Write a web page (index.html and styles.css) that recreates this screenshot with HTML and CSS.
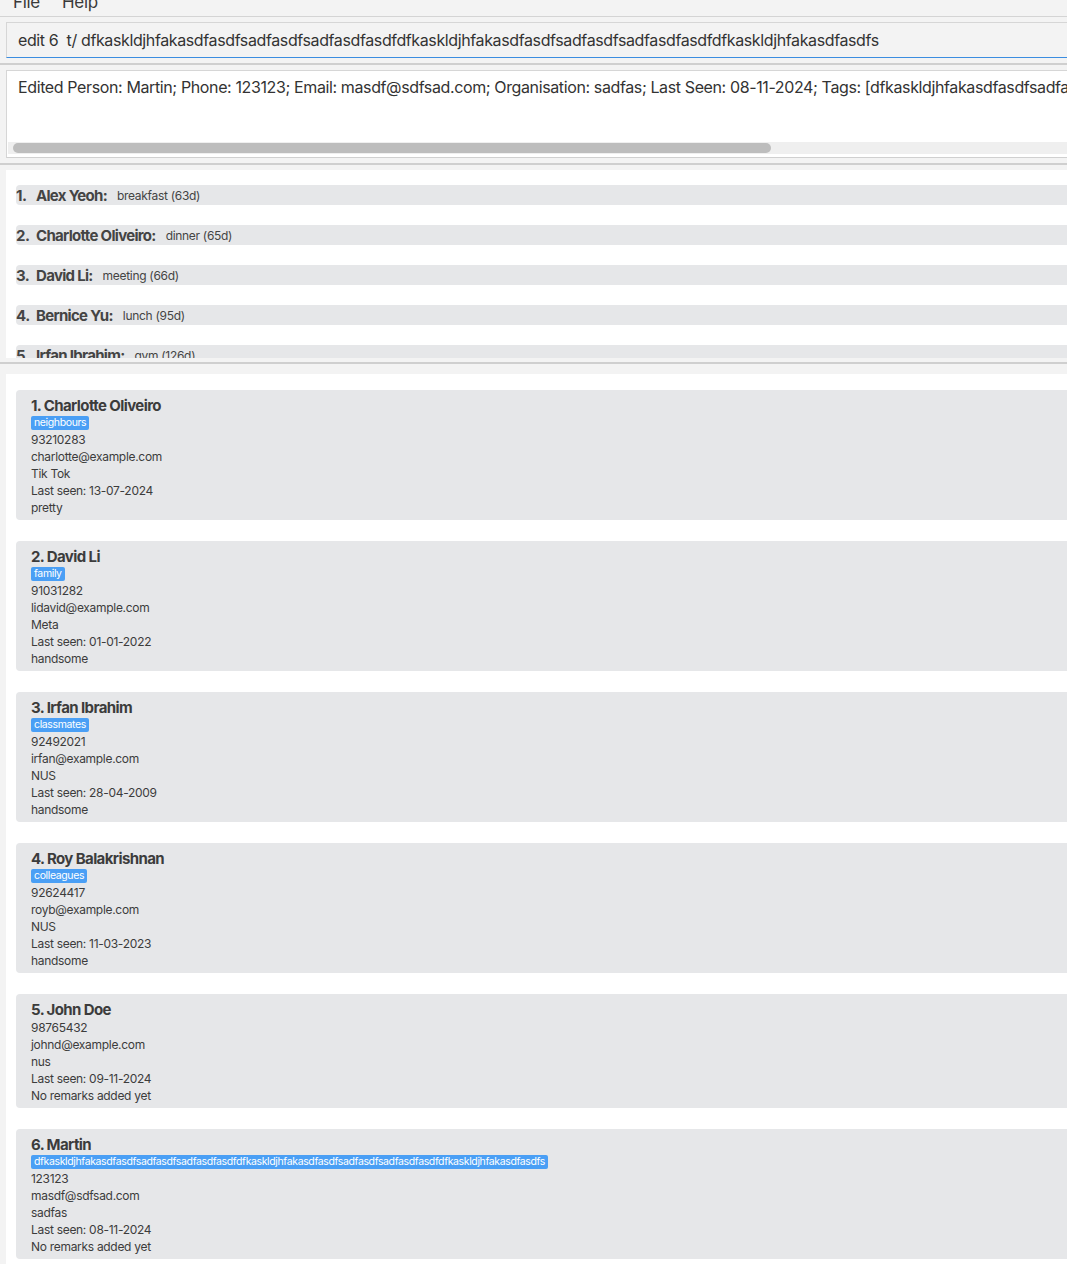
FILE: index.html
```html
<!DOCTYPE html>
<html>
<head>
<meta charset="utf-8">
<link rel="stylesheet" href="styles.css">
</head>
<body>
<div class="app">
  <div class="menubar">
    <span class="menu-item">File</span>
    <span class="menu-item">Help</span>
  </div>
  <div class="pane pane-cmd">
    <div class="command-box">edit 6  t/ dfkaskldjhfakasdfasdfsadfasdfsadfasdfasdfdfkaskldjhfakasdfasdfsadfasdfsadfasdfasdfdfkaskldjhfakasdfasdfs</div>
  </div>
  <div class="divider"></div>
  <div class="pane pane-result">
    <div class="result-box">
      <div class="result-text">Edited Person: Martin; Phone: 123123; Email: masdf@sdfsad.com; Organisation: sadfas; Last Seen: 08-11-2024; Tags: [dfkaskldjhfakasdfasdfsadfasdfsadfasdfasdfdfkaskldjhfakasdfasdfsadfasdfsadfasdfasdfdfkaskldjhfakasdfasdfs]</div>
      <div class="scroll-track"><div class="scroll-thumb"></div></div>
    </div>
  </div>
  <div class="divider"></div>
  <div class="pane pane-reminders">
    <div class="reminder-panel">
      <div class="reminder-row"><span class="r-idx">1.</span><span class="r-name">Alex Yeoh:</span><span class="r-detail">breakfast (63d)</span></div>
      <div class="reminder-row"><span class="r-idx">2.</span><span class="r-name">Charlotte Oliveiro:</span><span class="r-detail">dinner (65d)</span></div>
      <div class="reminder-row"><span class="r-idx">3.</span><span class="r-name">David Li:</span><span class="r-detail">meeting (66d)</span></div>
      <div class="reminder-row"><span class="r-idx">4.</span><span class="r-name">Bernice Yu:</span><span class="r-detail">lunch (95d)</span></div>
      <div class="reminder-row"><span class="r-idx">5.</span><span class="r-name">Irfan Ibrahim:</span><span class="r-detail">gym (126d)</span></div>
    </div>
  </div>
  <div class="divider"></div>
  <div class="pane pane-list">
    <div class="person-list">
      <div class="card">
        <div class="card-title">1. Charlotte Oliveiro</div>
        <div class="tags"><span class="tag">neighbours</span></div>
        <div class="line">93210283</div>
        <div class="line">charlotte@example.com</div>
        <div class="line">Tik Tok</div>
        <div class="line">Last seen: 13-07-2024</div>
        <div class="line">pretty</div>
      </div>
      <div class="card">
        <div class="card-title">2. David Li</div>
        <div class="tags"><span class="tag">family</span></div>
        <div class="line">91031282</div>
        <div class="line">lidavid@example.com</div>
        <div class="line">Meta</div>
        <div class="line">Last seen: 01-01-2022</div>
        <div class="line">handsome</div>
      </div>
      <div class="card">
        <div class="card-title">3. Irfan Ibrahim</div>
        <div class="tags"><span class="tag">classmates</span></div>
        <div class="line">92492021</div>
        <div class="line">irfan@example.com</div>
        <div class="line">NUS</div>
        <div class="line">Last seen: 28-04-2009</div>
        <div class="line">handsome</div>
      </div>
      <div class="card">
        <div class="card-title">4. Roy Balakrishnan</div>
        <div class="tags"><span class="tag">colleagues</span></div>
        <div class="line">92624417</div>
        <div class="line">royb@example.com</div>
        <div class="line">NUS</div>
        <div class="line">Last seen: 11-03-2023</div>
        <div class="line">handsome</div>
      </div>
      <div class="card">
        <div class="card-title">5. John Doe</div>
        <div class="line">98765432</div>
        <div class="line">johnd@example.com</div>
        <div class="line">nus</div>
        <div class="line">Last seen: 09-11-2024</div>
        <div class="line">No remarks added yet</div>
      </div>
      <div class="card">
        <div class="card-title">6. Martin</div>
        <div class="tags"><span class="tag">dfkaskldjhfakasdfasdfsadfasdfsadfasdfasdfdfkaskldjhfakasdfasdfsadfasdfsadfasdfasdfdfkaskldjhfakasdfasdfs</span></div>
        <div class="line">123123</div>
        <div class="line">masdf@sdfsad.com</div>
        <div class="line">sadfas</div>
        <div class="line">Last seen: 08-11-2024</div>
        <div class="line">No remarks added yet</div>
      </div>
    </div>
  </div>
</div>
</body>
</html>
```
FILE: styles.css
```css
html, body {
  margin: 0;
  padding: 0;
  overflow: hidden;
  background: #f3f3f3;
}
body {
  font-family: Inter, "Noto Sans", sans-serif;
  color: #3a3a3a;
  height: 1264px;
}
.app {
  width: 1110px;
  display: flex;
  flex-direction: column;
}
.menubar {
  height: 16px;
  border-bottom: 1px solid #d4d4d4;
  display: flex;
  gap: 22px;
  padding-left: 13px;
  overflow: hidden;
  background: #f3f3f3;
}
.menu-item {
  font-size: 17px;
  line-height: 16px;
  margin-top: -6px;
  color: #3a3a3a;
  letter-spacing: -0.3px;
}
.pane {
  padding-left: 6px;
}
.pane-cmd {
  padding-top: 5px;
  padding-bottom: 5px;
}
.command-box {
  height: 34px;
  border: 1px solid #d6d6d6;
  border-bottom: 1px solid #3b8de0;
  background: #f3f3f3;
  font-size: 16px;
  line-height: 34px;
  padding-left: 11px;
  white-space: pre;
  overflow: hidden;
  letter-spacing: -0.38px;
  color: #333;
}
.divider {
  height: 2px;
  background: #cfcfcf;
}
.pane-result {
  padding-top: 5px;
  padding-bottom: 5px;
}
.result-box {
  height: 86px;
  border: 1px solid #d6d6d6;
  background: #fff;
  display: flex;
  flex-direction: column;
  justify-content: space-between;
  border-bottom-color: #d0d0d0;
}
.result-text {
  font-size: 16px;
  line-height: 22px;
  padding: 5px 0 0 11px;
  white-space: nowrap;
  overflow: hidden;
  letter-spacing: -0.38px;
  color: #333;
}
.scroll-track {
  height: 12px;
  background: #efefef;
  margin: 0 0 3px 1px;
  padding: 1px 0 1px 5px;
  box-sizing: border-box;
}
.scroll-thumb {
  width: 758px;
  height: 10px;
  border-radius: 5px;
  background: #bdbdbd;
}
.pane-reminders {
  padding-top: 5px;
  padding-bottom: 4px;
}
.reminder-panel {
  background: #fff;
  height: 188px;
  overflow: hidden;
  padding-top: 15px;
  box-sizing: border-box;
  display: flex;
  flex-direction: column;
  gap: 20px;
}
.reminder-row {
  flex: none;
  margin-left: 10px;
  height: 20px;
  background: #e6e7e9;
  border-radius: 4px;
  display: flex;
  align-items: center;
  white-space: nowrap;
}
.r-idx {
  font-size: 15px;
  font-weight: 700;
  letter-spacing: -0.5px;
  color: #444;
  width: 20px;
}
.r-name {
  font-size: 15px;
  font-weight: 700;
  letter-spacing: -0.7px;
  color: #444;
  margin-right: 10px;
}
.r-detail {
  font-size: 12px;
  letter-spacing: -0.3px;
  color: #444;
}
.pane-list {
  padding-top: 10px;
}
.person-list {
  background: #fff;
  height: 900px;
  padding: 16px 0 0 10px;
  display: flex;
  flex-direction: column;
  gap: 21px;
}
.card {
  background: #e6e7e9;
  border-radius: 4px;
  padding: 6px 0 4px 15px;
}
.card-title {
  font-size: 15px;
  font-weight: 700;
  line-height: 19px;
  letter-spacing: -0.6px;
  color: #3c3c3c;
}
.tags {
  display: flex;
  padding: 1px 0 1px;
}
.tag {
  background: #4a9ff5;
  color: #fff;
  font-size: 10.5px;
  line-height: 14px;
  padding: 0 3px;
  border-radius: 2px;
  letter-spacing: -0.37px;
}
.line {
  font-size: 12px;
  line-height: 17px;
  letter-spacing: -0.3px;
  color: #3c3c3c;
}
```
